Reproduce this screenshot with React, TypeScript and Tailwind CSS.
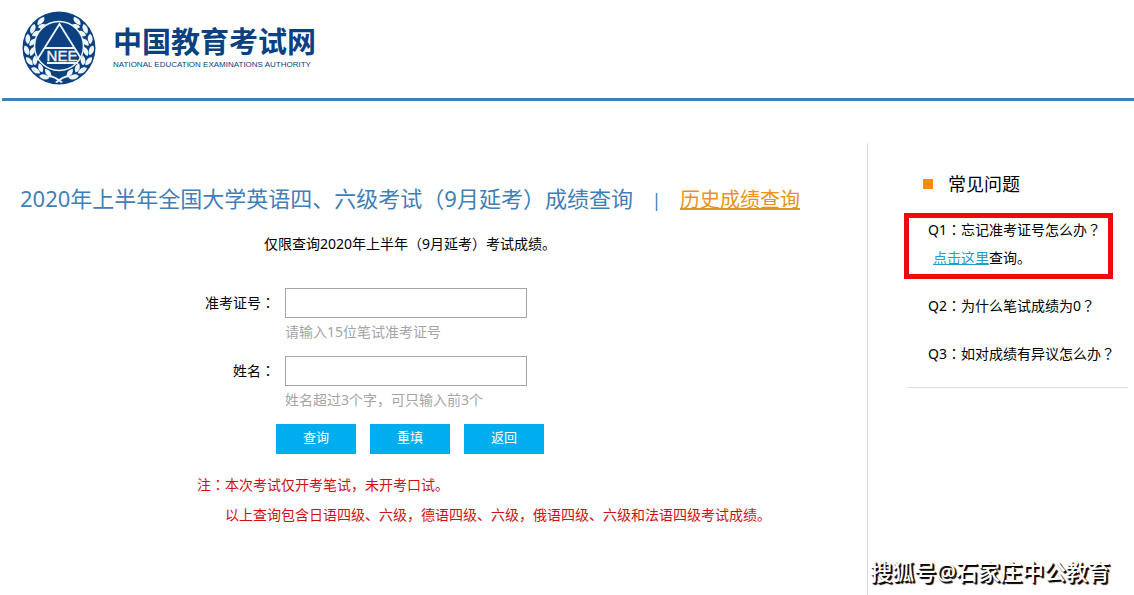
import type { ReactNode } from "react";

const questions = [
  { id: "Q2", text: "为什么笔试成绩为0" },
  { id: "Q3", text: "如对成绩有异议怎么办" },
];

// full-width colon and question mark sit in the middle of their cell
function Mark({ children }: { children: ReactNode }) {
  return <span className="font-['Noto_Sans_CJK_JP',sans-serif] leading-none">{children}</span>;
}

// angles of the leaf pairs on the left branch, the right one is mirrored
const leafAngles = [-34, -54, -74, -94, -114, -134, -153];

function Branch() {
  return (
    <g fill="#eef6fb">
      {leafAngles.map((angle) => (
        <g key={angle} transform={`rotate(${angle} 37 37)`}>
          <path d="M32 6c2-4 6-5 10-3-1 4-6 5-10 3z" />
          <path d="M31 8c4-2 7 0 9 4-5 2-8-1-9-4z" />
        </g>
      ))}
      <path d="M26 64c5 0 8 2 15 7l-2 1c-5-4-8-6-13-6z" />
    </g>
  );
}

function Logo() {
  return (
    <svg viewBox="0 0 74 74" className="size-[74px] shrink-0" aria-hidden="true">
      <circle cx="37" cy="37" r="36.5" fill="#0b4180" />
      <Branch />
      <g transform="translate(74 0) scale(-1 1)">
        <Branch />
      </g>
      <circle cx="37" cy="35" r="24.5" fill="#0b4180" stroke="#eef6fb" strokeWidth="1.5" />
      <path d="M15 49 37.5 13 60 49M23 37h29M25 52h31" fill="none" stroke="#eef6fb" strokeWidth="1.8" />
      <text
        x="40"
        y="50"
        textAnchor="middle"
        fill="#eef6fb"
        stroke="#eef6fb"
        strokeWidth="0.4"
        className="font-['Liberation_Sans',sans-serif] text-[15px]"
      >
        NEE
      </text>
    </svg>
  );
}

function Field({ id, label, hint }: { id: string; label: string; hint: string }) {
  return (
    <div className="flex h-[68px] gap-[10px]">
      <label htmlFor={id} className="w-[275px] text-right leading-[30px]">
        {label}
        <Mark>：</Mark>
      </label>
      <div>
        <input id={id} type="text" className="block h-[30px] w-[242px] border border-[#a5a5a5] bg-white px-2 outline-none" />
        <p className="leading-7 text-[#a5a5a5]">{hint}</p>
      </div>
    </div>
  );
}

export default function App() {
  return (
    <div className="relative flex min-h-screen flex-col bg-white font-['Noto_Sans','Noto_Sans_CJK_SC',sans-serif] text-sm text-black">
      <header className="ml-0.5 flex h-[101px] items-start gap-[17px] border-b-3 border-[#4280b8] pt-[11px] pl-5">
        <Logo />
        <div className="pt-4 text-[#0b4180]">
          <h1 className="text-[29px] leading-[30px] font-bold">中国教育考试网</h1>
          <p className="font-['Liberation_Sans',sans-serif] text-[8px] leading-4">NATIONAL EDUCATION EXAMINATIONS AUTHORITY</p>
        </div>
      </header>

      <div className="flex grow pt-[42px]">
        <main className="grow pt-[39px]">
          <div className="flex items-baseline pl-5 leading-8">
            <h2 className="text-[22px] text-[#3f80b8]">2020年上半年全国大学英语四、六级考试（9月延考）成绩查询</h2>
            <span className="w-[47px] text-center text-lg text-[#3f80b8]">|</span>
            <a href="#history" className="text-xl leading-8 text-[#e8921c] underline">历史成绩查询</a>
          </div>
          <p className="mt-[14px] pl-[264px] leading-7">仅限查询2020年上半年（9月延考）考试成绩。</p>

          <form className="mt-[30px]">
            <Field id="ticket" label="准考证号" hint="请输入15位笔试准考证号" />
            <Field id="name" label="姓名" hint="姓名超过3个字，可只输入前3个" />
            <div className="flex gap-[14px] pl-[276px] text-[13px] text-white">
              <button type="submit" className="h-[30px] w-20 bg-[#00aeef] pb-1">查询</button>
              <button type="reset" className="h-[30px] w-20 bg-[#00aeef] pb-1">重填</button>
              <button type="button" className="h-[30px] w-20 bg-[#00aeef] pb-1">返回</button>
            </div>
          </form>

          <div className="mt-4 pl-[197px] leading-[30px] text-[#d01010]">
            <p>注<Mark>：</Mark>本次考试仅开考笔试，未开考口试。</p>
            <p className="pl-7">以上查询包含日语四级、六级，德语四级、六级，俄语四级、六级和法语四级考试成绩。</p>
          </div>
        </main>

        <aside className="w-[267px] shrink-0 border-l border-[#dcdcdc] pt-[27px] pr-1.5 pl-10">
          <h3 className="flex items-center gap-[15px] pl-[15px] text-lg leading-7">
            <span className="size-[10px] bg-[#ff8c0a]" />
            常见问题
          </h3>
          <ul className="mt-[18px] border-b border-[#dcdcdc] pb-[19px] pl-5 leading-7">
            <li className="relative">
              Q1<Mark>：</Mark>忘记准考证号怎么办<Mark>？</Mark>
              <p className="pl-[5px]">
                <a href="#ticket-help" className="text-[#1c9fd0] underline">点击这里</a>查询。
              </p>
              <span className="pointer-events-none absolute -top-[3px] -left-6 h-[66px] w-[209px] border-5 border-[#ee0a0f]" />
            </li>
            {questions.map((question) => (
              <li key={question.id} className="mt-5">
                {question.id}
                <Mark>：</Mark>
                {question.text}
                <Mark>？</Mark>
              </li>
            ))}
          </ul>
        </aside>
      </div>

      <p className="absolute right-6 bottom-2 text-[22px] leading-8 font-medium text-white [text-shadow:1px_1px_1px_#000,2px_2px_1px_#000]">
        搜狐号@石家庄中公教育
      </p>
    </div>
  );
}
